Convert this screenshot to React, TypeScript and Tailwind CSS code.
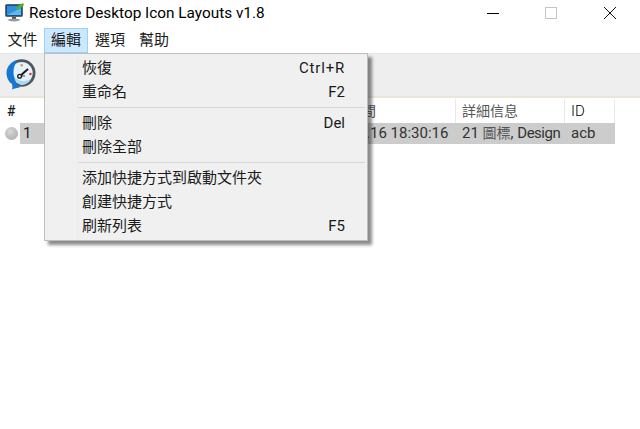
const font = "[font-family:'Roboto','Noto_Sans_CJK_TC',sans-serif]";

function MonitorIcon() {
  return (
    <svg width="22" height="22" viewBox="0 0 22 22" className="shrink-0">
      <rect x="1.5" y="2.5" width="17" height="12" rx="1" fill="#1b4f8f" stroke="#5a6a7a" />
      <rect x="3" y="4" width="14" height="9" fill="#2f8fd8" />
      <path d="M3 13 L17 6 V13 Z" fill="#5fb7ea" />
      <path d="M12 6 L15 3 L19 1 L20 3 L16 7 L14 8 Z" fill="#4caf3a" />
      <rect x="8" y="15" width="4" height="2" fill="#555" />
      <ellipse cx="10" cy="18" rx="6" ry="1.5" fill="#9a9a9a" />
    </svg>
  );
}

function ClockIcon() {
  return (
    <svg width="32" height="32" viewBox="0 0 32 32">
      <circle cx="16.7" cy="14" r="12.4" fill="#e4f2fb" stroke="#4f565e" strokeWidth="2.8" />
      <path d="M9 17 C12 22 18 24 26 20 C24 24 20 26 16 26 C13 25 10 22 9 17 Z" fill="#a9d8f4" />
      <path d="M13 1 C6 2 1.5 8 1.5 14 C1.5 19 4 23 7 25 C7.5 27 7.5 29 7 30.5 C9.5 29.5 12 28.8 15 28.5 C11 24 8.5 19 8.5 13 C8.5 8 10 4.5 13 1 Z" fill="#1776d0" />
      <path d="M15 17 L23 10" stroke="#1a1a1a" strokeWidth="2" fill="none" />
      <path d="M15 17 L20 17" stroke="#444" strokeWidth="1" fill="none" />
      <circle cx="14.6" cy="17.2" r="1.9" fill="#e4f2fb" stroke="#1a1a1a" strokeWidth="1.3" />
      <circle cx="16.7" cy="6.2" r="1.2" fill="#e9913a" />
      <circle cx="25.4" cy="15" r="1.3" fill="#e33" />
    </svg>
  );
}

function MenuRow({ label, hint }: { label: string; hint?: string }) {
  return (
    <div className="flex h-6 items-center justify-between pl-[37px] pr-[22px] text-[15px] leading-6 text-[#1a1a1a]">
      <span>{label}</span>
      {hint && <span className={hint === "Ctrl+R" ? "tracking-[0.8px]" : "tracking-normal"}>{hint}</span>}
    </div>
  );
}

function Sep() {
  return <div className="ml-[33px] mr-[2px] my-[3px] h-[1px] bg-[#d6d6d6]" />;
}

export default function App() {
  return (
    <div className={`relative h-[429px] w-[640px] overflow-hidden bg-white ${font} text-[15px] text-[#1a1a1a]`}>
      <div className="flex h-[28px] items-center pb-[2px]">
        <div className="ml-[4px] mr-[3px] w-[22px]"><MonitorIcon /></div>
        <span className="flex-1 whitespace-nowrap text-[15.35px] leading-[26px] text-black">Restore Desktop Icon Layouts v1.8</span>
        <div className="flex items-center">
          <div className="flex h-[26px] w-[58px] items-center justify-center pr-[4px]"><div className="h-[1px] w-[12px] bg-black" /></div>
          <div className="flex h-[26px] w-[58px] items-center justify-center pr-[4px]"><div className="h-[12px] w-[12px] border border-[#c4c4c4]" /></div>
          <div className="flex h-[26px] w-[58px] items-center justify-center pr-[2px]">
            <svg width="14" height="14" viewBox="0 0 14 14"><path d="M1 1 L13 13 M13 1 L1 13" stroke="#111" strokeWidth="1" fill="none" /></svg>
          </div>
        </div>
      </div>

      <div className="flex h-[25px] items-center pl-[1px] text-[15px]">
        <div className="flex h-[25px] w-[43px] items-center justify-center">文件</div>
        <div className="flex h-[25px] w-[44px] items-center justify-center border border-[#99d1ff] bg-[#cce8ff]">編輯</div>
        <div className="flex h-[25px] w-[44px] items-center justify-center">選項</div>
        <div className="flex h-[25px] w-[44px] items-center justify-center">幫助</div>
      </div>

      <div className="flex h-[45px] items-center border-t border-t-[#e6e6e6] border-b-2 border-b-[#e9e6d8] bg-[#eeeeee] pl-[5px]">
        <ClockIcon />
      </div>

      <div className="relative">
        <div className="flex h-[25px] items-center pt-[1px] text-[14px]">
          <div className="w-[455px] pl-[7px]"><span className="font-medium">#</span></div>
          <div className="flex h-full w-[109px] items-center border-l border-[#e8e8e8] pl-[6px] text-[#555]">詳細信息</div>
          <div className="flex h-full w-[51px] items-center border-x border-[#e8e8e8] pl-[6px] text-[15px] font-light text-black">ID</div>
        </div>
        <div className="flex h-[21px] items-center text-[15px]">
          <div className="ml-[5px] mr-[2px] h-[13px] w-[13px] rounded-full bg-[radial-gradient(circle_at_40%_35%,#d8d8d8,#a4a4a4)]" />
          <div className="flex h-full w-[595px] items-center bg-[#cccccc]">
            <span className="w-[436px] pl-[3px]">1</span>
            <span className="w-[108px] whitespace-nowrap pl-[6px] text-[#333]">21 <span className="text-[14px] text-[#555]">圖標</span>, <span className="tracking-[-0.5px]">Design</span></span>
            <span className="pl-[7px] text-[#333]">acb</span>
          </div>
        </div>
        <div className="absolute left-[362px] top-[1px] flex h-[25px] w-[14px] items-center text-[14px] text-[#555]">間</div>
        <span className="absolute left-[366px] top-[25px] h-[21px] whitespace-nowrap text-[15px] leading-[21px] text-[#333]">.16 18:30:16</span>
      </div>

      <div className="absolute left-[44px] top-[53px] h-[188px] w-[324px] border border-[#bdbdbd] bg-[#f0f0f0] py-[2px] shadow-[4px_4px_3px_rgba(0,0,0,0.45)]">
        <div className="absolute bottom-0 left-[32px] top-0 w-[1px] bg-[#ececec]" />
        <MenuRow label="恢復" hint="Ctrl+R" />
        <MenuRow label="重命名" hint="F2" />
        <Sep />
        <MenuRow label="刪除" hint="Del" />
        <MenuRow label="刪除全部" />
        <Sep />
        <MenuRow label="添加快捷方式到啟動文件夾" />
        <MenuRow label="創建快捷方式" />
        <MenuRow label="刷新列表" hint="F5" />
      </div>
    </div>
  );
}
